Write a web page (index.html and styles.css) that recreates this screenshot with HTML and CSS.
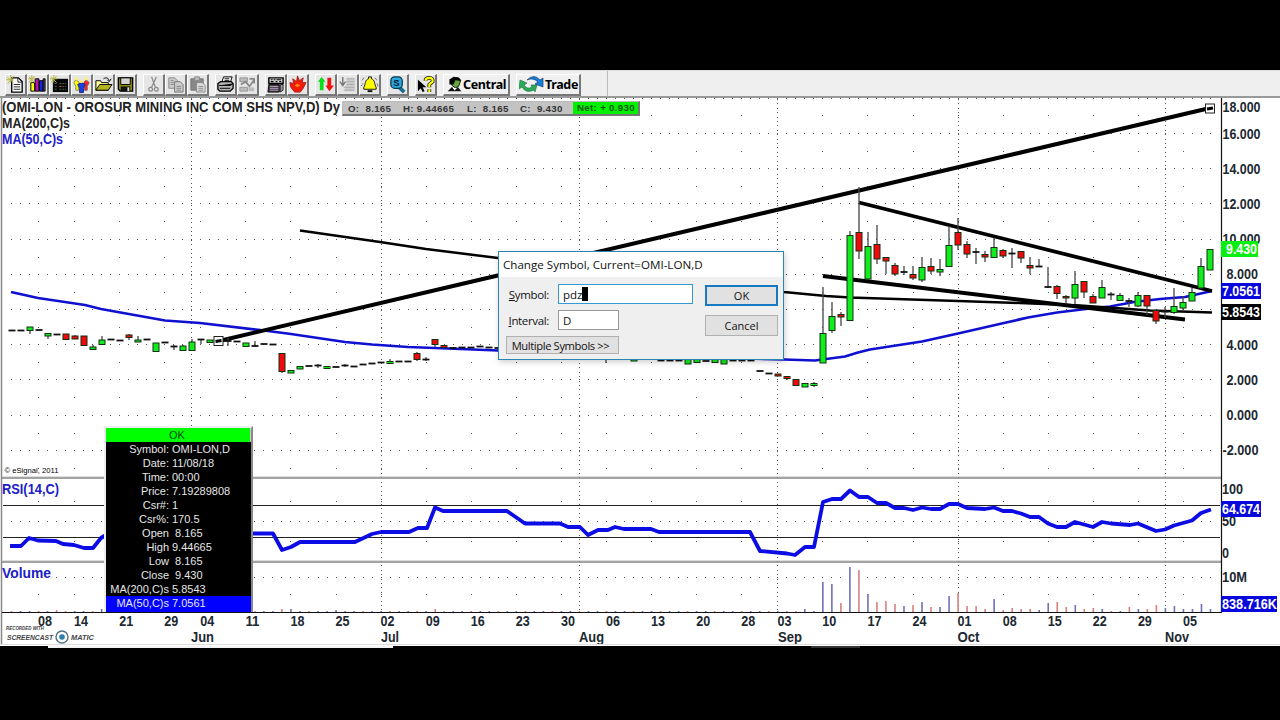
FILE: index.html
```html
<!DOCTYPE html>
<html lang="en">
<head>
<meta charset="utf-8">
<title>OMI-LON,D</title>
<link rel="stylesheet" href="styles.css">
</head>
<body>
<main class="window">
  <header class="toolbar">
    <div class="group">
      <button class="tool"><svg viewBox="0 0 20 20"><path d="M6 3h7l4 4v11H6z" fill="#fff" stroke="#000" stroke-width="1.4"/><path d="M12.500 3v4.500H17M8 10h7M8 12.500h7M8 15h7" fill="none" stroke="#222"/><path d="M1 2l7 6M8 1L2 9M0 5h8M5 0v8" stroke="#b4b838"/></svg></button>
      <button class="tool"><svg viewBox="0 0 20 20"><path d="M3 17V8h4v9z" fill="#ff0" stroke="#000"/><path d="M7.500 17V4h4v13z" fill="#b616b0" stroke="#000"/><path d="M12 17V6h4v11z" fill="#1522df" stroke="#000"/><path d="M16 4h2v13h-2z" fill="#555" stroke="#000"/><path d="M1 2l6 6M7 1L1 8M4 0v8M0 4h8" stroke="#b4b838"/></svg></button>
      <button class="tool"><svg viewBox="0 0 20 20"><path d="M3 4h16v14H3z" fill="#080808"/><path d="M5 9h3m2 0h7M5 12h3m2 0h7M5 15h3m2 0h7" stroke="#4d6b4d" stroke-dasharray="2 1"/><path d="M10 12h2" stroke="#e33"/><path d="M1 2l6 6M7 1L1 8M4 0v8M0 4h8" stroke="#b4b838"/></svg></button>
      <button class="tool"><svg viewBox="0 0 20 20"><path d="M2 8l2-3 3 2 1 3-1 3v3H4v-4z" fill="#ff0" stroke="#885"/><path d="M18 8l-3-3-2 2-1 3 1 3v3h3v-4z" fill="#f22" stroke="#855"/><path d="M6 10l4-2 4 2-2 4v4.500H8V14z" fill="#14e" stroke="#227"/><circle cx="5" cy="4" r="1.800" fill="#fe7"/><circle cx="15" cy="4" r="1.800" fill="#fe7"/><circle cx="10" cy="6.500" r="1.800" fill="#fe7"/></svg></button>
      <button class="tool"><svg viewBox="0 0 20 20"><path d="M2 16V6h5l1 2h7v8z" fill="#ffff9c" stroke="#000"/><path d="M2 16l4-6h13l-4 6z" fill="#b4b420" stroke="#000"/><path d="M10 4c3-2 5-1 6 2m-2-1l2 2 2-3" fill="none" stroke="#000"/></svg></button>
      <button class="tool"><svg viewBox="0 0 20 20"><path d="M2.500 3h15v14h-13l-2-2z" fill="#8c8c10" stroke="#000" stroke-width="1.500"/><path d="M5 3h10v7H5z" fill="#d4d4d4" stroke="#000"/><path d="M5 12h10v5H5z" fill="#111"/><path d="M12 13h2v4h-2z" fill="#ddd"/></svg></button>
    </div>
    <div class="group">
      <button class="tool"><svg viewBox="0 0 20 20" fill="none" stroke="#888" stroke-width="1.300"><path d="M8 2l4 11M13 2L8 13"/><circle cx="7" cy="15" r="2"/><circle cx="13" cy="15" r="2"/></svg></button>
      <button class="tool"><svg viewBox="0 0 20 20"><path d="M3 3h6l3 3v8H3z" fill="#ccc" stroke="#888"/><path d="M9 7h6l3 3v8H9z" fill="#ccc" stroke="#777"/><path d="M5 6h3m-3 2h3m-3 2h3m3 2h5m-5 2h5m-5 2h5" stroke="#888"/></svg></button>
      <button class="tool"><svg viewBox="0 0 20 20"><path d="M3 4h13v12H3z" fill="#888" stroke="#777"/><path d="M7 2h5v4H7z" fill="#bbb" stroke="#888"/><path d="M9 8h6l3 3v7H9z" fill="#ddd" stroke="#888"/><path d="M11 12h5m-5 2h5m-5 2h5" stroke="#888"/></svg></button>
    </div>
    <div class="group">
      <button class="tool"><svg viewBox="0 0 20 20"><path d="M6 8l2-6h9l-2 6" fill="#fff" stroke="#000"/><path d="M2 9l3-2h11l2 2v5l-3 3H4l-2-2z" fill="#b5b5b5" stroke="#000" stroke-width="1.400"/><path d="M3 11h12l3-2M4 14h11M9 4h5M9 6h5" stroke="#000"/></svg></button>
      <button class="tool"><svg viewBox="0 0 20 20"><path d="M2 3h8v4H2zm0 10h8v4H2z" fill="#bbb" stroke="#999"/><path d="M3 10l5-3 4 5 5-7m-5-1h5v5" fill="none" stroke="#888" stroke-width="1.800"/><path d="M11 13h6v4h-6z" fill="#bbb"/></svg></button>
    </div>
    <div class="group">
      <button class="tool"><svg viewBox="0 0 20 20"><path d="M3 3h15v6H3z" fill="#ddd" stroke="#000" stroke-width="1.500"/><path d="M5 5h2m1 0h2m1 0h5M5 7h3m2 0h2m2 0h2" stroke="#000" stroke-width="1.300"/><path d="M3 10h11v8H2z" fill="#333" stroke="#111"/><path d="M4 12h9M4 14h9M4 16h9" stroke="#cba7d2"/><path d="M15 10h3v6l-3 2z" fill="#999" stroke="#222"/></svg></button>
      <button class="tool"><svg viewBox="0 0 20 20"><path d="M10 1l2 5 4-3-1 5h4l-3 6-3 4H7l-4-5-1-5 4 1-1-5 4 3z" fill="#f51909" stroke="#a22"/><path d="M7 11l3-2 3 2-3 2z" fill="#f80"/></svg></button>
    </div>
    <div class="group">
      <button class="tool"><svg viewBox="0 0 20 20"><path d="M6 2l4 5H8v9H4V7H2z" fill="#08df18"/><path d="M12 3h4v8h3l-5 6-4-6h2z" fill="#f01111"/></svg></button>
      <button class="tool"><svg viewBox="0 0 20 20"><path d="M9 3h9v14H7v-5l2-2z" fill="#ccc"/><path d="M5 2v9M2 7l3 4 3-4" fill="none" stroke="#777" stroke-width="1.500"/><path d="M9 4h8M9 7h8M9 10h8M6 13h11M6 16h11" stroke="#aaa"/></svg></button>
      <button class="tool"><svg viewBox="0 0 20 20"><path d="M9 2h3v2c4 1 3 6 5 9v2H4v-2c2-3 1-8 5-9z" fill="#ff0" stroke="#111"/><path d="M8 16h5v2H8z" fill="#111"/><path d="M4 3L2 6m1 3l-2 3M16 3l2 3m0 3l1 3" stroke="#222" stroke-dasharray="1 1"/></svg></button>
    </div>
    <div class="group">
      <button class="tool"><svg viewBox="0 0 20 20"><path d="M12 13l5 5" stroke="#186c8e" stroke-width="4"/><rect x="3" y="2" width="12" height="12" rx="4" fill="#2ca8dc" stroke="#08364a" stroke-width="1.300"/><text x="5.500" y="11.700" class="glyph">S</text></svg></button>
    </div>
    <div class="group">
      <button class="tool"><svg viewBox="0 0 20 20"><path d="M2 5v12l3-3 2 4 2-1-2-4h4z" fill="#000"/><path d="M10 6q0-3 4-3 4 0 3.500 4l-3.500 3v3m0 2v3" fill="none" stroke="#222" stroke-width="4"/><path d="M10 6q0-3 4-3 4 0 3.500 4l-3.500 3v3m0 2v3" fill="none" stroke="#ff0" stroke-width="2.200"/></svg></button>
    </div>
    <button class="wide central"><svg viewBox="0 0 20 20"><path d="M6 7q0-5 6-5 5 0 5 4l-2 6-4 2-4-3z" fill="#64a73b" stroke="#000"/><path d="M4 10V4l5-3 6 1 3 4-7-1-2 5z"/><path d="M2 18l5-5 3 3 4-3 4 5z" fill="#111"/><path d="M8 14l2 3 3-3z" fill="#fff"/></svg><span>Central</span></button>
    <button class="wide trade"><svg viewBox="0 0 26 20"><path d="M1 6l-1 9 3-2q4 7 12 3l1 2 2-7-6 0 1 2q-5 3-8-2l3-2z" fill="#2baa58" stroke="#176b3c" stroke-width=".6"/><path d="M8 6q7-7 13 0l3-2 0 9-8-3 3-2q-5-5-11-2z" fill="#1680d8" stroke="#123c76" stroke-width=".7"/></svg><span>Trade</span></button>
  </header>

  <section class="workspace">
    <svg class="chart" id="chart" width="1280" height="548" viewBox="0 98 1280 548"></svg>
    <div class="quote">
      <span class="o">O:&nbsp; 8.165</span><span class="h">H: 9.44665</span><span class="l">L:&nbsp; 8.165</span><span class="c">C:&nbsp; 9.430</span><b class="net">Net: + 0.930</b>
    </div>

    <aside class="cursor">
      <div class="cursor-ok">OK</div>
      <dl class="readout">
        <dt>Symbol:</dt><dd>OMI-LON,D</dd>
        <dt>Date:</dt><dd>11/08/18</dd>
        <dt>Time:</dt><dd>00:00</dd>
        <dt>Price:</dt><dd>7.19289808</dd>
        <dt>Csr#:</dt><dd>1</dd>
        <dt>Csr%:</dt><dd>170.5</dd>
        <dt>Open</dt><dd>&nbsp;8.165</dd>
        <dt>High</dt><dd>9.44665</dd>
        <dt>Low</dt><dd>&nbsp;8.165</dd>
        <dt>Close</dt><dd>&nbsp;9.430</dd>
        <dt>MA(200,C)s</dt><dd>5.8543</dd>
        <dt class="selected">MA(50,C)s</dt><dd class="selected">7.0561</dd>
      </dl>
    </aside>

    <form class="dialog">
      <h1 class="dialog-title">Change Symbol, Current=OMI-LON,D</h1>
      <div class="dialog-body">
        <div class="fields">
          <div class="field"><label><u>S</u>ymbol:</label><div class="input symbol">pdz<i class="caret"></i></div></div>
          <div class="field"><label><u>I</u>nterval:</label><div class="input interval">D</div></div>
          <div class="button multiple">Multiple Symbols &gt;&gt;</div>
        </div>
        <div class="actions">
          <div class="button default">OK</div>
          <div class="button">Cancel</div>
        </div>
      </div>
    </form>
  </section>
</main>
<div class="under"><span class="under-light"></span><span class="under-dark"></span></div>
<script src="chart.js"></script>
</body>
</html>
```

FILE: styles.css
```css
* { box-sizing: border-box; }
body { margin: 0; padding-top: 70px; height: 720px; background: #000; overflow: hidden; font-family: "Liberation Sans", Arial, sans-serif; }
.window { height: 576px; background: #fff; }
.toolbar { display: flex; align-items: center; gap: 6px; height: 28px; padding: 2px 0 0 5px; background: linear-gradient(90deg, transparent 607px, #bbb 607px, #bbb 608px, transparent 608px), #efefef; border-top: 1px solid #ddd; border-bottom: 2px solid #999; }
.group { display: flex; }
.tool { width: 22px; height: 22px; padding: 0; border: 1px solid; border-color: #fff #777 #777 #fff; border-right-width: 2px; border-bottom-width: 2px; background: #e6e6e6; }
.tool svg { display: block; width: 19px; height: 19px; }
.glyph { font: bold 10px "Liberation Sans", Arial, sans-serif; fill: #00102a; }
.wide { display: flex; align-items: center; height: 22px; padding: 0 2px; border: 1px solid; border-color: #fff #777 #777 #fff; border-right-width: 2px; border-bottom-width: 2px; background: #f0f0f0; color: #000; }
.wide span { font: bold 12.5px "Noto Sans", sans-serif; letter-spacing: -.35px; }
.central { width: 67px; }
.central svg { flex: none; width: 17px; height: 19px; }
.trade { width: 65px; }
.trade svg { flex: none; width: 26px; height: 20px; }
.workspace { position: relative; height: 548px; }
.chart { display: block; }
.chart text { font-family: "Liberation Sans", Arial, sans-serif; }
.title { font-size: 14.2px; font-weight: bold; fill: #222; }
.blue { fill: #2020c8; }
.axis { font-size: 14.2px; font-weight: bold; fill: #202830; }
.tag { fill: #fff; }
.small { font-size: 8px; fill: #000; }
.badge { font-weight: bold; font-style: italic; fill: #444; }
.quote { position: absolute; left: 342px; top: 3px; width: 298px; height: 15px; display: grid; grid-template-columns: 55px 64px 53px 53px 1fr; align-items: center; padding-left: 5px; background: #c3c3c3; border: 1px solid #bbb; border-right: 2px solid #777; border-bottom: 2px solid #777; color: #333; font-size: 9.7px; letter-spacing: .32px; font-weight: bold; white-space: nowrap; }
.quote .net { height: 12px; padding-left: 4px; line-height: 12px; background: #00f000; color: #115511; }
.cursor { position: absolute; left: 104px; top: 328px; width: 149px; height: 186px; background: #000; border: 2px solid #ededed; border-right: 2px solid #888; border-bottom: 0; color: #e6e6e6; font-size: 11px; }
.cursor-ok { height: 14px; background: #0f0; color: #064806; text-align: center; line-height: 15px; padding-right: 2px; border-right: 1px solid #ccc; }
.readout { display: grid; grid-template-columns: 63px 1fr; margin: 0; line-height: 14px; white-space: nowrap; }
.readout dt { text-align: right; }
.readout dd { margin: 0; padding-left: 3px; }
.readout .selected { background: #00f; height: 16px; }
.dialog { position: absolute; left: 498px; top: 153px; width: 286px; height: 109px; margin: 0; background: #efefef; border: 1px solid #2c83b5; box-shadow: 1px 2px 6px #0003; font: 11.5px "Open Sans", "Noto Sans", sans-serif; color: #111; }
.dialog-title { margin: 0; height: 25px; padding-left: 4px; background: #fff; font: 11.6px/26px "Open Sans", "Noto Sans", sans-serif; white-space: nowrap; letter-spacing: 0; }
.dialog-body { display: flex; padding: 7px 5px 0 7px; }
.fields { width: 199px; }
.field { display: flex; align-items: center; height: 20px; margin-bottom: 6px; }
.field label { width: 43px; margin-right: 9px; text-align: right; font-size: 11.5px; letter-spacing: -.35px; white-space: nowrap; }
.input { display: flex; align-items: center; height: 20px; background: #fff; border: 1px solid #999; padding-left: 4px; }
.symbol { width: 135px; border-color: #329bd5; }
.caret { width: 6px; height: 14px; background: #000; }
.interval { width: 61px; }
.button { display: flex; align-items: center; justify-content: center; width: 73px; height: 21px; background: #e1e1e1; border: 1px solid #b0b0b0; font-size: 11px; white-space: nowrap; }
.multiple { width: 113px; height: 18px; margin-top: 6px; padding-right: 4px; font-size: 11.2px; letter-spacing: -.38px; }
.default { border: 2px solid #1579c4; margin: 1px 0 9px; }
.under { display: flex; height: 2px; padding-left: 48px; }
.under-light { width: 345px; background: #f3f3f3; }
.under-dark { width: 49px; margin-left: 418px; background: #333; }
```

FILE: chart.js
```js
const X = i => 11.5 + 9.015 * i;
const out = [];
const line = (x1, y1, x2, y2, color, w) => out.push(`<line x1="${x1}" y1="${y1}" x2="${x2}" y2="${y2}" stroke="${color}" stroke-width="${w}"/>`);
const rect = (x, y, w, h, fill, stroke) => out.push(`<rect x="${x}" y="${y}" width="${w}" height="${h}" fill="${fill}"${stroke ? ` stroke="${stroke}"` : ''}/>`);
const poly = (pts, color, w) => out.push(`<polyline points="${pts}" fill="none" stroke="${color}" stroke-width="${w}" stroke-linejoin="round"/>`);
const text = (x, y, s, cls, w) => out.push(`<text x="${x}" y="${y}" class="${cls}"${w ? ` textLength="${w}" lengthAdjust="spacingAndGlyphs"` : ''}>${s}</text>`);
const dot = (x, y) => rect(Math.round(x - .5), Math.round(y), 1, 1, '#555');

// Grid
const weeks = { 3: '08', 7: '14', 12: '21', 17: '29', 21: '04', 26: '11', 31: '18', 36: '25', 41: '02', 46: '09', 51: '16', 56: '23', 61: '30', 66: '06', 71: '13', 76: '20', 81: '28', 90: '10', 95: '17', 100: '24', 105: '01', 110: '08', 115: '15', 120: '22', 125: '29', 130: '05' };
const rows = [98, 521, 577];
for (let k = 0; k < 10; k++) rows.push(133 + k * 35.2);
for (const y of rows) for (let i = 0; i < 134; i++) dot(X(i), y);
for (const i of Object.keys(weeks)) {
  for (let k = 0; k < 10; k++) dot(X(+i), 151 + k * 35.2);
  for (const y of [115, 501, 541, 594]) dot(X(+i), y);
}
for (const i of [20, 41, 63, 85, 105, 128])
  for (let y = 99; y < 612; y += 4.4) dot(X(i), y);

// Panel frames
line(1.500, 98, 1.500, 644, '#888', 1.500);
for (const y of [478, 562]) { line(2, y - 1.5, 1221, y - 1.5, '#ddd', 1); line(2, y, 1221, y, '#858585', 1.7); }
for (const y of [505.5, 537.5]) line(3, y, 1220, y, '#222', 1);

// Volume
const vol = { 5: -610, 10: 609, 30: -609, 31: 609, 36: 610, 47: -609, 86: -611, 88: 609, 89: 611, 90: 582, 91: 584, 92: -603, 93: 567, 94: -570, 95: 594, 96: -602, 97: -601, 98: -604, 99: 606, 100: -605, 101: 602, 102: -607, 103: 607, 104: 596, 105: -593, 106: -606, 107: -606, 108: -609, 109: 599, 110: -610, 111: -608, 112: -609, 113: -609, 114: 610, 115: 603, 116: -602, 117: -607, 118: 605, 119: -609, 120: -608, 121: 609, 122: -611, 123: 611, 124: -607, 125: 609, 126: -609, 127: -605, 128: 608, 129: 606, 130: 609, 131: 609, 132: 604, 133: 609 };
for (let i = 0; i < 90; i++) if (!vol[i]) vol[i] = i % 3 ? 611 : -611;
for (const i in vol) line(X(+i), Math.abs(vol[i]), X(+i), 612, vol[i] < 0 ? '#d88080' : '#7070b8', 1.6);
line(2, 612.5, 1222, 612.5, '#111', 1.2);
line(1221.5, 98, 1221.5, 613, '#111', 1.2);

// Moving averages
const ma50 = '11,292 38,298 85,305 101,309 165,320.5 200,323 264,330.5 291,334 318,338 345,342 372,344.5 408,347 435,348 498,350.5 640,355 784,359.5 815,360.500 845,356.5 858,352.5 870,349.5 922,341.5 958,333.5 1004,323 1028,317.5 1057,312.5 1090,308.5 1110,306.5 1134,302 1160,299 1185,297 1212,291';
poly(ma50, '#1010d0', 2.7);
poly('300,230.5 380,242 426,249 498,258 640,275 784,292 826,296 850,297.5 958,301 1020,303 1080,305.5 1150,310.5 1212,312.5', '#000', 2.5);

// Candles: index, kind, body top, body bottom, wick top, wick bottom
const candles = `0 d 330.5
1 d 330.5
2 g 327 330.5 327 334
3 d 330
4 g 333.5 336 333 339
5 d 334.5
6 r 334 339.5
7 r 336 339 335 339
8 r 336 345.5
9 g 347 349.5 345 350
10 g 340 344.5 336 345
11 d 339.5
12 d 340.5
13 r 335 337.5 334 340
14 g 340 342 336 342
15 d 339.5
16 g 343 351.5
17 d 342.5
18 d 346.5 0 345 350
19 g 346 350.5 345 351
20 g 342 350.5 339 351
21 d 339.5 0 339 344
22 g 340 342.5
24 d 341 0 338 346
25 d 341.5
26 g 343 346.5
27 d 346 0 341 347
28 d 344
29 d 344.5
30 r 353.5 371.5 353 373
31 g 370.500 373
32 g 366.5 369
33 d 366
34 d 365.5 0 364 368
35 g 366.5 368.5
36 d 367
37 d 365.500 0 364 367
38 d 366.5
39 d 364.5
40 d 363.5
41 d 362.5
42 g 361.5 363.5 359 364
43 d 361.5
44 d 361.5
45 r 353.5 359.5 352 361
46 d 359.500 0 357 361
47 r 339.5 344.5 339 347
48 r 345.5 347.5
49 d 348
50 d 347.5
51 d 347.5
52 d 346.5
53 d 347.5
54 d 348
66 d 359 0 358 363
69 g 358 361
72 d 360.5
73 d 360.5
74 d 360.5
75 g 358 364
76 g 358 362.5
77 d 361
78 g 358 362.5
79 g 359 364
80 d 360.5
81 d 360.5
82 d 360.5
83 d 371
84 d 373.5
85 r 374 376
86 r 376.5 378.5 376 380
87 r 379.5 385.5
88 g 383.5 387
89 g 383.5 385.5 382 387
90 g 333.5 363 287 363
91 g 316.5 330.5 302 333
92 r 314.5 317 312 326
93 g 235.5 320.5 231 321
94 r 232.5 251 187 259
95 g 246.5 279 232 280
96 r 244.5 259 225 264
97 r 257.5 261 257 274
98 r 265.5 274 263 276
99 d 272 0 266 275
100 r 274.5 278 266 280
101 g 267.5 280 257 282
102 r 266.5 271 258 274
103 g 269.5 272 259 276
104 g 245.5 266.5 226 267
105 r 232.5 245 218 250
106 r 244.5 254 241 258
107 d 252 0 248 264
108 r 254.5 257 251 262
109 g 247.5 257.5 238 258
110 r 250.5 256 249 258
111 d 253.5 0 248 268
112 r 251.5 258 251 263
113 r 265.5 268 257 274
114 d 266.5 0 259 267
115 d 287 0 267 288
116 r 286.5 293.5 285 299
117 r 296.5 298 295 303
118 g 284.5 298 271 304
119 r 281.5 292 281 298
120 r 296.5 303 294 303
121 g 287.5 298 280 298
122 d 294.5 0 292 300
123 g 295.5 300.5 293 301
124 d 301 0 298 307
125 g 295.5 306 292 307
126 r 295.5 306 295 315
127 r 310.5 321 310 324
128 d 311.5 0 307 318
129 g 306.5 312.5 288 314
130 g 302.5 308 296 310
131 g 292.5 301 288 301
132 g 266.5 288 258 289
133 g 249.5 270 249 270`;

// Trend lines
line(219, 341, 1210, 108, '#000', 4);
line(859, 202.5, 1212, 291, '#000', 3.8);
line(823, 276, 1185, 319.5, '#000', 4);
for (const x of [218.5, 1210]) {
  const y = x < 300 ? 341 : 108.5;
  rect(x - 4.5, y - 4.5, 9, 9, '#fff', '#222');
  line(x - 3, y + .5, x + 3, y - .5, '#000', 3);
}
for (const row of candles.split('\n')) {
  const [i, kind, top, bottom, wt, wb] = row.split(' ');
  const x = Math.round(X(+i));
  if (wt) line(x, +wt, x, +wb, '#444', 1.3);
  if (kind === 'd') line(x - 3.5, +top, x + 3.5, +top, '#111', 1.8);
  else rect(x - 3, +top, 6, bottom - top, kind === 'g' ? '#10ec1c' : '#f0080c', '#123012');
}

// RSI
const rsi = '10,546 21,546 29,538 38,540.5 56,541 63,544 74,545 84,548 93,548 101,538 106,535 240,533.5 273,533.5 282,550 291,547 300,542 355,542 372,534 381,532 409,532 418,528 427,528 435,507.5 443,511 507,511 525,523.5 560,523.5 568,527 580,527 588,535 598,530 608,530 615,527 624,529 651,529 659,532 750,532 760,551 787,553.5 795,555 805,547 814,547 823,502 832,499 841,499 850,490.5 859,497 868,497 877,503 886,503 895,508 904,508 913,510 922,507.5 931,509 940,509 949,504 958,504 967,508 985,509 994,507.5 1003,511 1012,511 1021,513.5 1030,517 1039,517 1048,523.5 1057,527 1066,527 1075,522 1093,527 1102,522 1111,523.5 1130,525 1138,523.5 1156,531 1165,529.5 1174,525.5 1192,520.5 1201,513 1211,509.5';
poly(rsi, '#0c0ce4', 3.8);

// Labels
text(2, 112, '(OMI-LON - OROSUR MINING INC COM SHS NPV,D) Dy', 'title', 338);
text(2, 128, 'MA(200,C)s', 'title', 68);
text(2, 144, 'MA(50,C)s', 'title blue', 61);
text(2, 494, 'RSI(14,C)', 'title blue', 57);
text(2, 578, 'Volume', 'title blue', 49);
text(4.5, 472.5, '© eSignal, 2011', 'small', 54);
const levels = { '18.000': 112, '16.000': 138.5, '14.000': 173.5, '12.000': 208.5, '10.000': 243.5, '8.000': 279, '4.000': 350, '2.000': 385, '0.000': 420, '-2.000': 455 };
for (const s in levels) text(s.length === 5 ? 1226.5 : 1222.5, levels[s], s, 'axis', s.length === 5 ? 31.500 : s[0] === '-' ? 36 : 38);
text(1222, 494, '100', 'axis', 21);
text(1222, 526, '50', 'axis', 14);
text(1222, 558, '0', 'axis', 7);
text(1222, 582, '10M', 'axis', 25);
const tag = (y, h, w, fill, s, tx, tw) => { rect(1221, y, w, h, fill); text(tx, y + h - 3, s, 'axis tag', tw); };
tag(241, 16, 37, '#0cee12', '9.430', 1226, 31);
tag(283, 16, 40, '#0808dc', '7.0561', 1222, 38);
tag(304, 16, 40, '#000', '5.8543', 1222, 38);
tag(501, 16, 40, '#0808dc', '64.674', 1222, 38);
tag(596, 16, 56, '#0808dc', '838.716K', 1222, 55);
for (const i in weeks) text(X(+i) - .5, 626, weeks[i], 'axis', 14);
text(777.5, 626, '03', 'axis', 14);
const months = [[191, 'Jun', 23], [381, 'Jul', 18], [579, 'Aug', 25], [778, 'Sep', 24], [957.5, 'Oct', 22], [1165, 'Nov', 24]];
for (const [x, s, w] of months) text(x, 642, s, 'axis', w);

// Recorder badge
out.push('<g class="badge"><text x="6" y="630" font-size="5.5" textLength="38" lengthAdjust="spacingAndGlyphs">RECORDED WITH</text><text x="7" y="640" font-size="7.5" textLength="46" lengthAdjust="spacingAndGlyphs">SCREENCAST</text><text x="71" y="640" font-size="7.5" textLength="23" lengthAdjust="spacingAndGlyphs">MATIC</text></g>');
out.push('<circle cx="62" cy="637" r="6" fill="#fff" stroke="#4e7387" stroke-width="1.4"/><circle cx="62" cy="637" r="2.8" fill="#2d7fae"/>');
line(0, 644.5, 1280, 644.5, '#ddd', 1);
document.getElementById('chart').innerHTML = out.join('');
```
